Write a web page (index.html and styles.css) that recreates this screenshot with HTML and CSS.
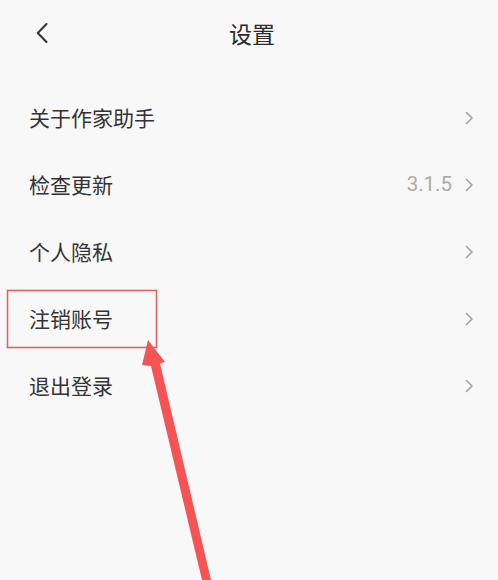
FILE: index.html
```html
<!DOCTYPE html>
<html lang="zh">
<head>
<meta charset="utf-8">
<title>设置</title>
<link rel="stylesheet" href="styles.css">
</head>
<body>
<div class="page">
  <header class="topbar">
    <span class="back">
      <svg width="12" height="20" viewBox="0 0 12 20"><path d="M10.5 1 L1.8 10 L10.5 19" fill="none" stroke="#333" stroke-width="2" stroke-linecap="round" stroke-linejoin="round"/></svg>
    </span>
    <h1 class="title">设置</h1>
  </header>
  <ul class="list">
    <li class="row"><span class="label">关于作家助手</span><span class="right"><svg class="chev" width="9" height="14" viewBox="0 0 9 14"><path d="M1.5 1.5 L7 7 L1.5 12.5" fill="none" stroke="#a3a3a3" stroke-width="1.6" stroke-linecap="round" stroke-linejoin="round"/></svg></span></li>
    <li class="row"><span class="label">检查更新</span><span class="right"><span class="version">3.1.5</span><svg class="chev" width="9" height="14" viewBox="0 0 9 14"><path d="M1.5 1.5 L7 7 L1.5 12.5" fill="none" stroke="#a3a3a3" stroke-width="1.6" stroke-linecap="round" stroke-linejoin="round"/></svg></span></li>
    <li class="row"><span class="label">个人隐私</span><span class="right"><svg class="chev" width="9" height="14" viewBox="0 0 9 14"><path d="M1.5 1.5 L7 7 L1.5 12.5" fill="none" stroke="#a3a3a3" stroke-width="1.6" stroke-linecap="round" stroke-linejoin="round"/></svg></span></li>
    <li class="row"><span class="label">注销账号</span><span class="right"><svg class="chev" width="9" height="14" viewBox="0 0 9 14"><path d="M1.5 1.5 L7 7 L1.5 12.5" fill="none" stroke="#a3a3a3" stroke-width="1.6" stroke-linecap="round" stroke-linejoin="round"/></svg></span></li>
    <li class="row"><span class="label">退出登录</span><span class="right"><svg class="chev" width="9" height="14" viewBox="0 0 9 14"><path d="M1.5 1.5 L7 7 L1.5 12.5" fill="none" stroke="#a3a3a3" stroke-width="1.6" stroke-linecap="round" stroke-linejoin="round"/></svg></span></li>
  </ul>
  <svg class="annot" width="498" height="580" viewBox="0 0 498 580">
    <rect x="7.5" y="290.5" width="149" height="57" fill="none" stroke="#e0625f" stroke-width="1.6"/>
    <polygon points="148,340 165,362 160,363.5 211,580 202,580 151,366 142,365" fill="#f45454"/>
  </svg>
</div>
</body>
</html>
```
FILE: styles.css
```css
html, body {
  margin: 0;
  padding: 0;
  background: #f8f8f8;
}
.page {
  position: relative;
  width: 498px;
  height: 580px;
  overflow: hidden;
  font-family: "Noto Sans CJK SC", "Noto Sans", sans-serif;
  color: #333;
}
.topbar {
  position: relative;
  height: 66px;
  display: flex;
  align-items: center;
  justify-content: center;
}
.back {
  position: absolute;
  left: 36px;
  top: 23px;
  display: flex;
}
.title {
  margin: 0 0 0 6px;
  font-size: 23px;
  font-weight: 400;
  line-height: 1;
  color: #2a2a2a;
}
.list {
  list-style: none;
  margin: 0;
  padding: 18px 0 0 0;
}
.row {
  height: 67px;
  display: flex;
  align-items: center;
  justify-content: space-between;
  padding: 0 24px 0 29px;
}
.label {
  font-size: 21px;
  line-height: 1;
  color: #333;
}
.right {
  display: flex;
  align-items: center;
  gap: 13px;
}
.version {
  font-family: Roboto, "Noto Sans", sans-serif;
  font-size: 20.5px;
  line-height: 1;
  color: #ababab;
}
.chev {
  display: block;
}
.annot {
  position: absolute;
  left: 0;
  top: 0;
  pointer-events: none;
}
```
